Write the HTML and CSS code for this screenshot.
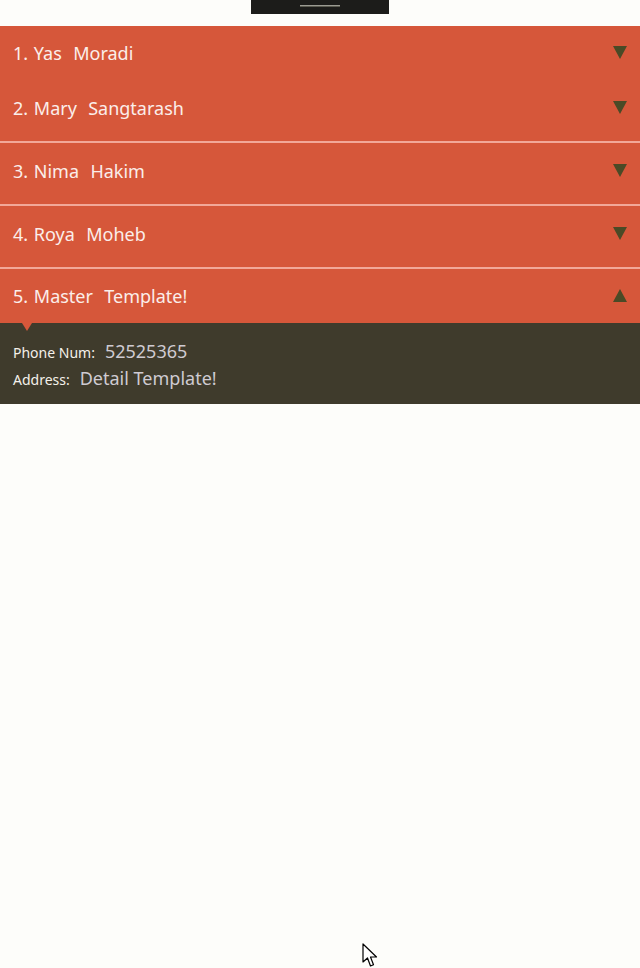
FILE: index.html
```html
<!DOCTYPE html>
<html>
<head>
<meta charset="utf-8">
<link rel="stylesheet" href="styles.css">
</head>
<body>
<div class="topbar"><div class="grip"></div></div>
<div class="list">
  <div class="item first">
    <div class="header"><span class="name">1. Yas  Moradi</span><span class="arrow down"></span></div>
  </div>
  <div class="item">
    <div class="header"><span class="name">2. Mary  Sangtarash</span><span class="arrow down"></span></div>
  </div>
  <div class="item">
    <div class="header"><span class="name">3. Nima  Hakim</span><span class="arrow down"></span></div>
  </div>
  <div class="item">
    <div class="header"><span class="name">4. Roya  Moheb</span><span class="arrow down"></span></div>
  </div>
  <div class="item last">
    <div class="header"><span class="name">5. Master  Template!</span><span class="arrow up"></span></div>
  </div>
  <div class="detail">
    <span class="pointer"></span>
    <div class="row"><span class="label">Phone Num:</span><span class="value">52525365</span></div>
    <div class="row"><span class="label">Address:</span><span class="value">Detail Template!</span></div>
  </div>
</div>
<svg class="cursor" width="18" height="26" viewBox="0 0 18 26"><path d="M1 1 L1 19 L5.5 15 L8.5 23 L11.5 21.8 L8.5 14 L14.5 14 Z" fill="#fff" stroke="#000" stroke-width="1.2" stroke-linejoin="round"/></svg>
</body>
</html>
```
FILE: styles.css
```css
html, body {
  margin: 0;
  padding: 0;
  background: #fdfdfa;
  font-family: "Noto Sans", "Open Sans", sans-serif;
}
body {
  width: 640px;
  height: 968px;
  position: relative;
  overflow: hidden;
}
.topbar {
  width: 138px;
  height: 14px;
  margin: 0 0 0 251px;
  background: #1c1c1a;
  display: flex;
  justify-content: center;
  align-items: flex-start;
}
.grip {
  width: 40px;
  height: 1px;
  margin-top: 5px;
  background: #9a9a92;
  border-bottom: 1px solid #5a5a50;
}
.list {
  margin-top: 12px;
  background: #d6573a;
  display: flex;
  flex-direction: column;
}
.item {
  border-bottom: 2px solid #f2a898;
}
.item .header {
  height: 56px;
  margin-bottom: 5px;
  display: flex;
  align-items: center;
  justify-content: space-between;
  padding: 0 13px 0 13px;
}
.item.first {
  border-bottom: none;
}
.item.first .header {
  height: 54px;
  margin-bottom: 0;
}
.item.last {
  border-bottom: none;
}
.item.last .header {
  height: 54px;
  margin-bottom: 0;
}
.name {
  color: #fbeeea;
  font-size: 18px;
  white-space: pre;
  line-height: 24px;
  word-spacing: 1px;
}
.arrow {
  width: 0;
  height: 0;
  border-left: 7px solid transparent;
  border-right: 7px solid transparent;
}
.arrow.down {
  border-top: 13px solid #4a4a26;
  margin-top: -1px;
}
.arrow.up {
  border-bottom: 13px solid #4a4a26;
  margin-top: -2px;
}
.detail {
  position: relative;
  background: #3f3b2c;
  padding: 16px 13px 12px 13px;
  display: flex;
  flex-direction: column;
  gap: 1px;
}
.pointer {
  position: absolute;
  left: 22px;
  top: 0;
  width: 0;
  height: 0;
  border-left: 5px solid transparent;
  border-right: 5px solid transparent;
  border-top: 8px solid #d6573a;
}
.row {
  display: flex;
  align-items: baseline;
  height: 26px;
}
.label {
  color: #f4f0ea;
  font-size: 14px;
  margin-right: 10px;
}
.value {
  color: #cfcbd2;
  font-size: 18px;
}
.cursor {
  position: absolute;
  left: 362px;
  top: 943px;
}
```
